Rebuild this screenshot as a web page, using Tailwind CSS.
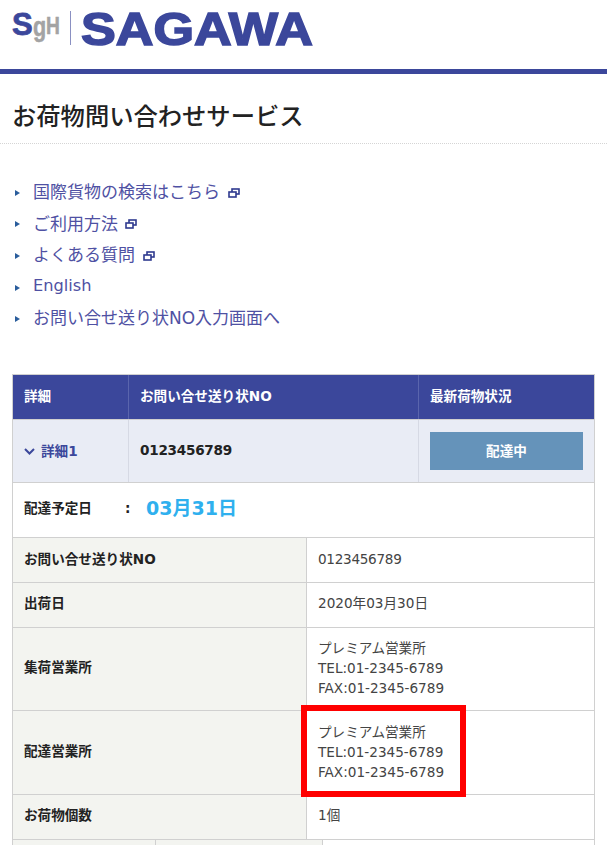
<!DOCTYPE html>
<html lang="ja">
<head>
    <meta charset="UTF-8">
    <meta name="viewport" content="width=device-width, initial-scale=1.0">
    <title>お荷物問い合わせサービス</title>
    <script src="https://cdn.jsdelivr.net/npm/@tailwindcss/browser@4"></script>
</head>
<body class="bg-white text-[#222] text-[13.6px] font-['DejaVu_Sans','Noto_Sans_CJK_JP',sans-serif]">
<div class="relative h-[845px] overflow-hidden">

    <!-- logo -->
    <header class="h-[69px] flex items-start pl-[12px] pt-[10px]">
        <div class="w-[50px] h-[35px] flex items-start font-['Liberation_Sans',sans-serif] font-bold leading-none">
            <span class="w-[21px] text-[31px] text-[#3b479b] mt-[-1px] [-webkit-text-stroke:0.8px_#3b479b]">S</span>
            <span class="w-[13px] origin-left scale-x-[.8] text-[27px] text-[#a3a3a3] mt-[4px] [-webkit-text-stroke:0.5px_#a3a3a3]">g</span>
            <span class="w-[14px] origin-left scale-x-[.8] text-[24px] text-[#a3a3a3] mt-[4px] [-webkit-text-stroke:0.5px_#a3a3a3]">H</span>
        </div>
        <div class="w-px h-[34px] ml-[8px] mt-px bg-[#8a90c2]"></div>
        <div class="ml-[10px] h-[36px] flex items-center">
            <span class="inline-block origin-left scale-x-[1.11] text-[47px] leading-none font-bold text-[#3b479b] font-['Liberation_Sans',sans-serif] [-webkit-text-stroke:1.6px_#3b479b]">SAGAWA</span>
        </div>
    </header>
    <div class="h-[5px] bg-[#3b479b]"></div>

    <!-- title -->
    <div class="h-[70px] flex items-center pl-[12px] pt-[18px] border-b border-dotted border-[#d5d5d5]">
        <h1 class="text-[24.3px] font-medium text-[#222]">お荷物問い合わせサービス</h1>
    </div>

    <!-- links -->
    <ul class="pt-[33px] pl-[15px] text-[17px] text-[#4f51a3]">
        <li class="h-[31.6px] flex items-center">
            <span class="w-0 h-0 border-y-[3.5px] border-y-transparent border-l-[5px] border-l-[#2a5d9c] mr-[13px]"></span>国際貨物の検索はこちら
            <svg class="ml-[8px]" width="12" height="10" viewBox="0 0 12 10" fill="none" stroke="#2f3a8f" stroke-width="1.6"><rect x="4" y="1" width="7" height="5"/><rect x="1" y="4" width="7" height="5" fill="#fff"/></svg>
        </li>
        <li class="h-[31.6px] flex items-center">
            <span class="w-0 h-0 border-y-[3.5px] border-y-transparent border-l-[5px] border-l-[#2a5d9c] mr-[13px]"></span>ご利用方法
            <svg class="ml-[7px]" width="12" height="10" viewBox="0 0 12 10" fill="none" stroke="#2f3a8f" stroke-width="1.6"><rect x="4" y="1" width="7" height="5"/><rect x="1" y="4" width="7" height="5" fill="#fff"/></svg>
        </li>
        <li class="h-[31.6px] flex items-center">
            <span class="w-0 h-0 border-y-[3.5px] border-y-transparent border-l-[5px] border-l-[#2a5d9c] mr-[13px]"></span>よくある質問
            <svg class="ml-[8px]" width="12" height="10" viewBox="0 0 12 10" fill="none" stroke="#2f3a8f" stroke-width="1.6"><rect x="4" y="1" width="7" height="5"/><rect x="1" y="4" width="7" height="5" fill="#fff"/></svg>
        </li>
        <li class="h-[31.6px] flex items-center">
            <span class="w-0 h-0 border-y-[3.5px] border-y-transparent border-l-[5px] border-l-[#2a5d9c] mr-[13px]"></span><span class="text-[16.2px] pb-[2px]">English</span>
        </li>
        <li class="h-[31.6px] flex items-center">
            <span class="w-0 h-0 border-y-[3.5px] border-y-transparent border-l-[5px] border-l-[#2a5d9c] mr-[13px]"></span>お問い合せ送り状NO入力画面へ
        </li>
    </ul>

    <!-- result table -->
    <div class="absolute left-[12px] top-[374px] w-[583px] border border-[#d0d0d0] border-b-0">
        <div class="grid grid-cols-[116px_290px_1fr] h-[44px] bg-[#3b479b] text-white font-bold">
            <div class="flex items-center pl-[11px] pb-[2px] border-r border-[#5a65ad]">詳細</div>
            <div class="flex items-center pl-[11px] pb-[2px] border-r border-[#5a65ad]">お問い合せ送り状NO</div>
            <div class="flex items-center pl-[11px] pb-[2px]">最新荷物状況</div>
        </div>
        <div class="grid grid-cols-[116px_290px_1fr] h-[63px] bg-[#e9ecf5] border-t border-[#d0d0d0]">
            <div class="flex items-center pl-[11px] border-r border-[#d6d9e4] font-bold text-[#3b479b]">
                <svg class="mr-[6px]" width="11" height="7" viewBox="0 0 11 7" fill="none" stroke="#3b479b" stroke-width="2"><path d="M1 1l4.5 4.5L10 1"/></svg>詳細1
            </div>
            <div class="flex items-center pl-[11px] pb-[2px] border-r border-[#d6d9e4] font-bold tracking-[-0.27px]">0123456789</div>
            <div class="flex items-center pl-[11px]">
                <div class="w-[153px] h-[38px] bg-[#6593ba] text-white font-bold flex items-center justify-center">配達中</div>
            </div>
        </div>
        <div class="h-[55px] flex items-center pl-[11px] border-t border-[#d0d0d0] bg-white pb-[3px]">
            <span class="w-[101px] font-bold">配達予定日</span>
            <span class="w-[21px] font-bold">:</span>
            <span class="text-[19px] font-bold text-[#2fb0ee]">03月31日</span>
        </div>
        <div class="grid grid-cols-[294px_1fr] h-[45px] border-t border-[#d0d0d0]">
            <div class="flex items-center pl-[11px] pb-[2px] bg-[#f3f4f0] border-r border-[#d0d0d0] font-bold">お問い合せ送り状NO</div>
            <div class="flex items-center pl-[11px] pb-[2px] tracking-[-0.3px] text-[#444]">0123456789</div>
        </div>
        <div class="grid grid-cols-[294px_1fr] h-[45px] border-t border-[#d0d0d0]">
            <div class="flex items-center pl-[11px] pb-[3px] bg-[#f3f4f0] border-r border-[#d0d0d0] font-bold">出荷日</div>
            <div class="flex items-center pl-[11px] pb-[3px] text-[#444]">2020年03月30日</div>
        </div>
        <div class="grid grid-cols-[294px_1fr] h-[83px] border-t border-[#d0d0d0]">
            <div class="flex items-center pl-[11px] pb-[3px] bg-[#f3f4f0] border-r border-[#d0d0d0] font-bold">集荷営業所</div>
            <div class="flex flex-col justify-center pl-[11px] pb-[2px] leading-[20px] text-[#444]">
                <span>プレミアム営業所</span><span>TEL:01-2345-6789</span><span>FAX:01-2345-6789</span>
            </div>
        </div>
        <div class="grid grid-cols-[294px_1fr] h-[84px] border-t border-[#d0d0d0]">
            <div class="flex items-center pl-[11px] pb-[3px] bg-[#f3f4f0] border-r border-[#d0d0d0] font-bold">配達営業所</div>
            <div class="flex flex-col justify-center pl-[11px] pb-[2px] leading-[20px] text-[#444]">
                <span>プレミアム営業所</span><span>TEL:01-2345-6789</span><span>FAX:01-2345-6789</span>
            </div>
        </div>
        <div class="grid grid-cols-[294px_1fr] h-[45px] border-t border-[#d0d0d0]">
            <div class="flex items-center pl-[11px] pb-[3px] bg-[#f3f4f0] border-r border-[#d0d0d0] font-bold">お荷物個数</div>
            <div class="flex items-center pl-[11px] pb-[3px] text-[#444]">1個</div>
        </div>
        <div class="grid grid-cols-[143px_167px_1fr] h-[45px] border-t border-[#d0d0d0]">
            <div class="bg-[#f3f4f0] border-r border-[#d0d0d0]"></div>
            <div class="bg-[#f3f4f0] border-r border-[#d0d0d0]"></div>
            <div></div>
        </div>
    </div>

    <!-- annotation -->
    <div class="absolute left-[301px] top-[705px] w-[165px] h-[92px] border-[6px] border-[#ff0000]"></div>
</div>
</body>
</html>
